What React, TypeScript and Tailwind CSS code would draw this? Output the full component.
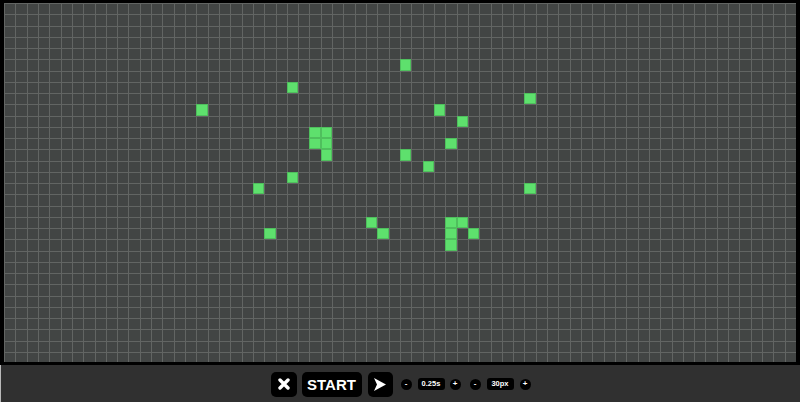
import React from 'react';

const COLS = 70;
const ROWS = 32;

// live cells as [col, row]
const live: [number, number][] = [
  [35, 5], [25, 7], [46, 8], [17, 9], [38, 9], [40, 10],
  [27, 11], [28, 11], [27, 12], [28, 12], [39, 12], [28, 13],
  [35, 13], [37, 14], [25, 15], [22, 16], [46, 16],
  [32, 19], [39, 19], [40, 19], [23, 20], [33, 20], [39, 20], [41, 20], [39, 21],
];

const liveSet = new Set(live.map(([c, r]) => `${c}:${r}`));

function Board() {
  const cells = [];
  for (let r = 0; r < ROWS; r++) {
    for (let c = 0; c < COLS; c++) {
      const alive = liveSet.has(`${c}:${r}`);
      cells.push(
        <div
          key={`${c}-${r}`}
          className={
            alive
              ? '-ml-px -mt-px bg-[#5ee06d] border border-[#4fbf5d]'
              : 'bg-[#424544]'
          }
        />
      );
    }
  }
  return (
    <div className="h-[365px] bg-black pt-[3px] pl-[4px] pr-[4px] pb-[3px]">
      <div className="h-full overflow-hidden bg-[#626563] pt-px pl-px grid grid-cols-[repeat(70,minmax(0,1fr))] auto-rows-[10.25px] gap-px">
        {cells}
      </div>
    </div>
  );
}

function RoundBtn({ label }: { label: string }) {
  return (
    <button className="w-[11px] h-[11px] rounded-full bg-black text-white text-[8px] font-bold leading-none flex items-center justify-center">
      {label}
    </button>
  );
}

function Pill({ label }: { label: string }) {
  return (
    <div className="h-[12px] w-[27px] rounded-[3px] bg-black text-white text-[7.5px] font-bold leading-none flex items-center justify-center">
      {label}
    </div>
  );
}

function Toolbar() {
  return (
    <div className="h-[37px] bg-[#303030] border-l border-[#b9b9b9] flex items-center justify-center pt-px">
      <button className="w-[26px] h-[25px] rounded-[5px] bg-black flex items-center justify-center">
        <svg width="12" height="12" viewBox="0 0 12 12">
          <path d="M2 2 L10 10 M10 2 L2 10" stroke="white" strokeWidth="3.4" strokeLinecap="round" />
        </svg>
      </button>
      <button className="ml-[5px] w-[60px] h-[25px] rounded-[5px] bg-black text-white text-[15px] font-bold leading-none flex items-center justify-center">
        START
      </button>
      <button className="ml-[6px] w-[25px] h-[25px] rounded-[5px] bg-black flex items-center justify-center">
        <svg width="12" height="13" viewBox="0 0 12 13">
          <polygon points="0,0 12,6.5 0,13 3,6.5" fill="white" />
        </svg>
      </button>
      <div className="ml-[8px] flex items-center">
        <RoundBtn label="-" />
        <div className="ml-[6px]"><Pill label="0.25s" /></div>
        <div className="ml-[5px]"><RoundBtn label="+" /></div>
      </div>
      <div className="ml-[9px] flex items-center">
        <RoundBtn label="-" />
        <div className="ml-[6px]"><Pill label="30px" /></div>
        <div className="ml-[6px]"><RoundBtn label="+" /></div>
      </div>
    </div>
  );
}

export default function App() {
  return (
    <div className="w-[800px] h-[402px] overflow-hidden font-['Liberation_Sans',Arial,sans-serif]">
      <Board />
      <Toolbar />
    </div>
  );
}
